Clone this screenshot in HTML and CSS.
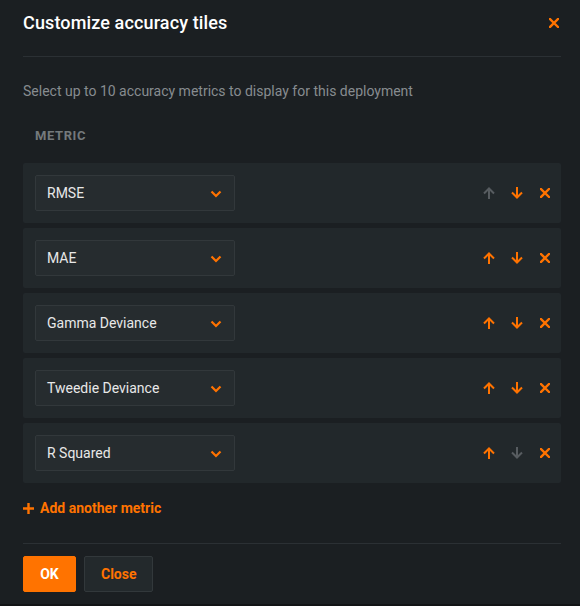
FILE: index.html
```html
<!DOCTYPE html>
<html>
<head>
<meta charset="utf-8">
<link rel="stylesheet" href="styles.css">
</head>
<body>
<div class="modal">
  <div class="modal-header">
    <h1 class="title">Customize accuracy tiles</h1>
    <button class="icon-btn close-x" aria-label="Close">
      <svg width="10" height="10" viewBox="0 0 10 10"><path d="M1 1L9 9M9 1L1 9" stroke="currentColor" stroke-width="2.4" stroke-linecap="square"/></svg>
    </button>
  </div>
  <p class="subtitle">Select up to 10 accuracy metrics to display for this deployment</p>
  <div class="col-label">METRIC</div>
  <div class="rows">
    <div class="row">
      <div class="select"><span>RMSE</span><svg class="chev" width="12" height="8" viewBox="0 0 12 8"><path d="M1.5 1.5L6 6L10.5 1.5" fill="none" stroke="currentColor" stroke-width="2.2"/></svg></div>
      <div class="actions">
        <span class="icon disabled"><svg width="12" height="12" viewBox="0 0 12 12"><path d="M6 12V1.5M1 6.5L6 1.5L11 6.5" fill="none" stroke="currentColor" stroke-width="2"/></svg></span>
        <span class="icon"><svg width="12" height="12" viewBox="0 0 12 12"><path d="M6 0V10.5M1 5.5L6 10.5L11 5.5" fill="none" stroke="currentColor" stroke-width="2"/></svg></span>
        <span class="icon"><svg width="10" height="10" viewBox="0 0 10 10"><path d="M1 1L9 9M9 1L1 9" stroke="currentColor" stroke-width="2.4" stroke-linecap="square"/></svg></span>
      </div>
    </div>
    <div class="row">
      <div class="select"><span>MAE</span><svg class="chev" width="12" height="8" viewBox="0 0 12 8"><path d="M1.5 1.5L6 6L10.5 1.5" fill="none" stroke="currentColor" stroke-width="2.2"/></svg></div>
      <div class="actions">
        <span class="icon"><svg width="12" height="12" viewBox="0 0 12 12"><path d="M6 12V1.5M1 6.5L6 1.5L11 6.5" fill="none" stroke="currentColor" stroke-width="2"/></svg></span>
        <span class="icon"><svg width="12" height="12" viewBox="0 0 12 12"><path d="M6 0V10.5M1 5.5L6 10.5L11 5.5" fill="none" stroke="currentColor" stroke-width="2"/></svg></span>
        <span class="icon"><svg width="10" height="10" viewBox="0 0 10 10"><path d="M1 1L9 9M9 1L1 9" stroke="currentColor" stroke-width="2.4" stroke-linecap="square"/></svg></span>
      </div>
    </div>
    <div class="row">
      <div class="select"><span>Gamma Deviance</span><svg class="chev" width="12" height="8" viewBox="0 0 12 8"><path d="M1.5 1.5L6 6L10.5 1.5" fill="none" stroke="currentColor" stroke-width="2.2"/></svg></div>
      <div class="actions">
        <span class="icon"><svg width="12" height="12" viewBox="0 0 12 12"><path d="M6 12V1.5M1 6.5L6 1.5L11 6.5" fill="none" stroke="currentColor" stroke-width="2"/></svg></span>
        <span class="icon"><svg width="12" height="12" viewBox="0 0 12 12"><path d="M6 0V10.5M1 5.5L6 10.5L11 5.5" fill="none" stroke="currentColor" stroke-width="2"/></svg></span>
        <span class="icon"><svg width="10" height="10" viewBox="0 0 10 10"><path d="M1 1L9 9M9 1L1 9" stroke="currentColor" stroke-width="2.4" stroke-linecap="square"/></svg></span>
      </div>
    </div>
    <div class="row">
      <div class="select"><span>Tweedie Deviance</span><svg class="chev" width="12" height="8" viewBox="0 0 12 8"><path d="M1.5 1.5L6 6L10.5 1.5" fill="none" stroke="currentColor" stroke-width="2.2"/></svg></div>
      <div class="actions">
        <span class="icon"><svg width="12" height="12" viewBox="0 0 12 12"><path d="M6 12V1.5M1 6.5L6 1.5L11 6.5" fill="none" stroke="currentColor" stroke-width="2"/></svg></span>
        <span class="icon"><svg width="12" height="12" viewBox="0 0 12 12"><path d="M6 0V10.5M1 5.5L6 10.5L11 5.5" fill="none" stroke="currentColor" stroke-width="2"/></svg></span>
        <span class="icon"><svg width="10" height="10" viewBox="0 0 10 10"><path d="M1 1L9 9M9 1L1 9" stroke="currentColor" stroke-width="2.4" stroke-linecap="square"/></svg></span>
      </div>
    </div>
    <div class="row">
      <div class="select"><span>R Squared</span><svg class="chev" width="12" height="8" viewBox="0 0 12 8"><path d="M1.5 1.5L6 6L10.5 1.5" fill="none" stroke="currentColor" stroke-width="2.2"/></svg></div>
      <div class="actions">
        <span class="icon"><svg width="12" height="12" viewBox="0 0 12 12"><path d="M6 12V1.5M1 6.5L6 1.5L11 6.5" fill="none" stroke="currentColor" stroke-width="2"/></svg></span>
        <span class="icon disabled"><svg width="12" height="12" viewBox="0 0 12 12"><path d="M6 0V10.5M1 5.5L6 10.5L11 5.5" fill="none" stroke="currentColor" stroke-width="2"/></svg></span>
        <span class="icon"><svg width="10" height="10" viewBox="0 0 10 10"><path d="M1 1L9 9M9 1L1 9" stroke="currentColor" stroke-width="2.4" stroke-linecap="square"/></svg></span>
      </div>
    </div>
  </div>
  <div class="add-wrap">
    <button class="add-link"><svg width="11" height="11" viewBox="0 0 11 11"><path d="M5.5 0V11M0 5.5H11" stroke="currentColor" stroke-width="2.4"/></svg><span>Add another metric</span></button>
  </div>
  <div class="footer">
    <button class="btn btn-primary">OK</button>
    <button class="btn btn-secondary">Close</button>
  </div>
</div>
</body>
</html>
```

FILE: styles.css
```css
* { box-sizing: border-box; }
html, body { margin: 0; padding: 0; }
body {
  background: #121416;
  font-family: Roboto, "Liberation Sans", Arial, sans-serif;
  width: 580px;
  height: 606px;
  overflow: hidden;
}
.modal {
  background: #1b1f22;
  width: 580px;
  height: 604px;
  padding: 0 19px 0 23px;
  display: flex;
  flex-direction: column;
}
.modal-header {
  display: flex;
  align-items: center;
  justify-content: space-between;
  padding: 11px 0 21px;
  border-bottom: 1px solid #2b3034;
}
.title {
  margin: 0;
  font-size: 18px;
  font-weight: 500;
  line-height: 24px;
  letter-spacing: 0.13px;
  color: #ffffff;
}
.icon-btn {
  background: none;
  border: 0;
  padding: 0;
  color: #ff7300;
  display: flex;
  align-items: center;
  justify-content: center;
  width: 16px;
  height: 16px;
  margin-right: -1px;
}
.subtitle {
  margin: 24px 0 0;
  font-size: 14px;
  line-height: 20px;
  color: #878c90;
}
.col-label {
  margin: 26px 0 0 12px;
  font-size: 13px;
  font-weight: 700;
  line-height: 18px;
  color: #74797c;
  letter-spacing: 0.6px;
}
.rows {
  margin-top: 18px;
  display: flex;
  flex-direction: column;
  gap: 5px;
}
.row {
  height: 60px;
  background: #22282b;
  display: flex;
  align-items: center;
  justify-content: space-between;
  padding: 0 8px 0 12px;
  border-radius: 2px;
}
.select {
  width: 200px;
  height: 36px;
  background: #262c2f;
  border: 1px solid #32383b;
  border-radius: 2px;
  display: flex;
  align-items: center;
  justify-content: space-between;
  padding: 0 12px 0 11px;
  font-size: 14px;
  color: #e8e8e8;
}
.chev { color: #ff7300; margin-top: 1px; }
.actions {
  display: flex;
  align-items: center;
  gap: 12px;
}
.icon {
  width: 16px;
  height: 16px;
  display: flex;
  align-items: center;
  justify-content: center;
  color: #ff7300;
}
.icon.disabled { color: #575c60; }
.add-wrap {
  padding: 15px 0 25px;
  border-bottom: 1px solid #2b3034;
}
.add-link {
  background: none;
  border: 0;
  padding: 0;
  display: flex;
  align-items: center;
  gap: 6px;
  color: #ff7300;
  font-family: inherit;
  font-size: 14px;
  font-weight: 700;
  line-height: 20px;
}
.footer {
  display: flex;
  gap: 8px;
  padding-top: 12px;
}
.btn {
  height: 36px;
  border-radius: 2px;
  font-family: inherit;
  font-size: 14px;
  font-weight: 700;
  padding: 0 16px;
  cursor: pointer;
}
.btn-primary {
  background: #ff7300;
  border: 1px solid #ff7300;
  color: #ffffff;
  width: 53px;
}
.btn-secondary {
  background: #23292c;
  border: 1px solid #32383b;
  color: #ff7300;
  width: 69px;
}
```
